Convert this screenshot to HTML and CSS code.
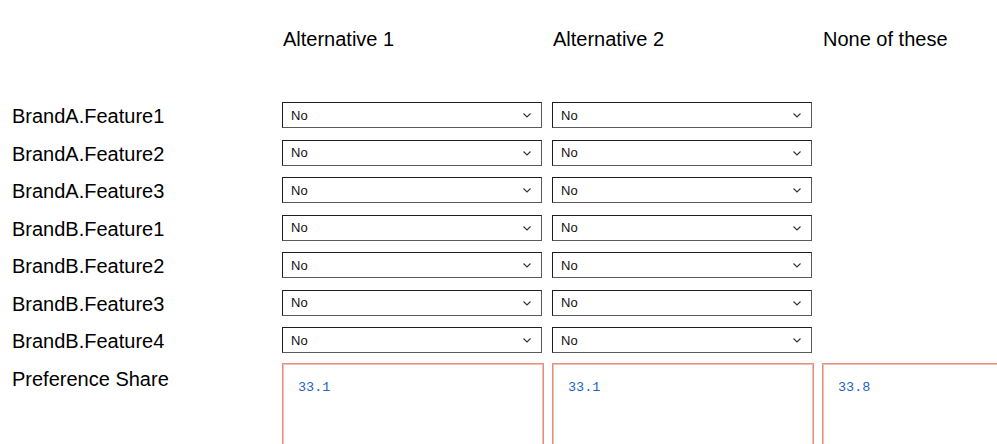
FILE: index.html
```html
<!DOCTYPE html>
<html lang="en">
<head>
    <meta charset="UTF-8">
    <meta name="viewport" content="width=device-width, initial-scale=1.0">
    <title>Preference Share Simulator</title>
    <link rel="stylesheet" href="styles.css">
</head>
<body>
    <div class="sim">
        <div class="row header">
            <div></div>
            <div>Alternative 1</div>
            <div>Alternative 2</div>
            <div>None of these</div>
        </div>

        <div class="row">
            <div class="label">BrandA.Feature1</div>
            <div class="pick"><select><option>No</option><option>Yes</option></select><svg class="chev" viewBox="0 0 8 5"><path d="M0.5 0.5 L4 4 L7.5 0.5"/></svg></div>
            <div class="pick"><select><option>No</option><option>Yes</option></select><svg class="chev" viewBox="0 0 8 5"><path d="M0.5 0.5 L4 4 L7.5 0.5"/></svg></div>
        </div>
        <div class="row">
            <div class="label">BrandA.Feature2</div>
            <div class="pick"><select><option>No</option><option>Yes</option></select><svg class="chev" viewBox="0 0 8 5"><path d="M0.5 0.5 L4 4 L7.5 0.5"/></svg></div>
            <div class="pick"><select><option>No</option><option>Yes</option></select><svg class="chev" viewBox="0 0 8 5"><path d="M0.5 0.5 L4 4 L7.5 0.5"/></svg></div>
        </div>
        <div class="row">
            <div class="label">BrandA.Feature3</div>
            <div class="pick"><select><option>No</option><option>Yes</option></select><svg class="chev" viewBox="0 0 8 5"><path d="M0.5 0.5 L4 4 L7.5 0.5"/></svg></div>
            <div class="pick"><select><option>No</option><option>Yes</option></select><svg class="chev" viewBox="0 0 8 5"><path d="M0.5 0.5 L4 4 L7.5 0.5"/></svg></div>
        </div>
        <div class="row">
            <div class="label">BrandB.Feature1</div>
            <div class="pick"><select><option>No</option><option>Yes</option></select><svg class="chev" viewBox="0 0 8 5"><path d="M0.5 0.5 L4 4 L7.5 0.5"/></svg></div>
            <div class="pick"><select><option>No</option><option>Yes</option></select><svg class="chev" viewBox="0 0 8 5"><path d="M0.5 0.5 L4 4 L7.5 0.5"/></svg></div>
        </div>
        <div class="row">
            <div class="label">BrandB.Feature2</div>
            <div class="pick"><select><option>No</option><option>Yes</option></select><svg class="chev" viewBox="0 0 8 5"><path d="M0.5 0.5 L4 4 L7.5 0.5"/></svg></div>
            <div class="pick"><select><option>No</option><option>Yes</option></select><svg class="chev" viewBox="0 0 8 5"><path d="M0.5 0.5 L4 4 L7.5 0.5"/></svg></div>
        </div>
        <div class="row">
            <div class="label">BrandB.Feature3</div>
            <div class="pick"><select><option>No</option><option>Yes</option></select><svg class="chev" viewBox="0 0 8 5"><path d="M0.5 0.5 L4 4 L7.5 0.5"/></svg></div>
            <div class="pick"><select><option>No</option><option>Yes</option></select><svg class="chev" viewBox="0 0 8 5"><path d="M0.5 0.5 L4 4 L7.5 0.5"/></svg></div>
        </div>
        <div class="row">
            <div class="label">BrandB.Feature4</div>
            <div class="pick"><select><option>No</option><option>Yes</option></select><svg class="chev" viewBox="0 0 8 5"><path d="M0.5 0.5 L4 4 L7.5 0.5"/></svg></div>
            <div class="pick"><select><option>No</option><option>Yes</option></select><svg class="chev" viewBox="0 0 8 5"><path d="M0.5 0.5 L4 4 L7.5 0.5"/></svg></div>
        </div>

        <div class="row shares">
            <div class="label">Preference Share</div>
            <pre class="share">33.1</pre>
            <pre class="share">33.1</pre>
            <pre class="share">33.8</pre>
        </div>
    </div>
</body>
</html>
```

FILE: styles.css
```css
html, body {
    overflow: hidden;
}
body {
    margin: 0;
    font-family: Arial, "Liberation Sans", sans-serif;
    color: #000;
}
.sim {
    padding: 28px 0 0 12px;
}
.row {
    display: grid;
    grid-template-columns: 270px 270px 270px 270px;
    height: 37.5px;
}
.header {
    height: 74px;
    font-size: 20px;
    line-height: 23px;
}
.header div {
    padding-left: 1px;
}
.label {
    font-size: 20px;
    line-height: 23px;
    padding-top: 3px;
}
.pick {
    position: relative;
    width: 260px;
    height: 26px;
}
.pick select {
    appearance: none;
    -webkit-appearance: none;
    box-sizing: border-box;
    width: 260px;
    height: 26px;
    margin: 0;
    padding: 0 0 0 8px;
    border: 1px solid;
    border-color: #1e1e1e #5a5a5a #5a5a5a #1e1e1e;
    border-radius: 0;
    background: #fff;
    font-family: Arial, "Liberation Sans", sans-serif;
    font-size: 13px;
    color: #111;
}
.chev {
    position: absolute;
    right: 11px;
    top: 11px;
    width: 8px;
    height: 5px;
    pointer-events: none;
}
.chev path {
    fill: none;
    stroke: #333;
    stroke-width: 1.1;
}
.shares {
    height: auto;
    margin-top: -2px;
}
.shares .label {
    padding-top: 5px;
}
.share {
    box-sizing: border-box;
    width: 262px;
    height: 110px;
    margin: 0;
    padding: 16px 15px;
    border: 1px solid #e38f80;
    box-shadow: inset 0 0 0 1px #f2beb2;
    font-family: "Liberation Mono", "Courier New", monospace;
    font-size: 13.5px;
    line-height: 16px;
    color: #2463c4;
}
```
